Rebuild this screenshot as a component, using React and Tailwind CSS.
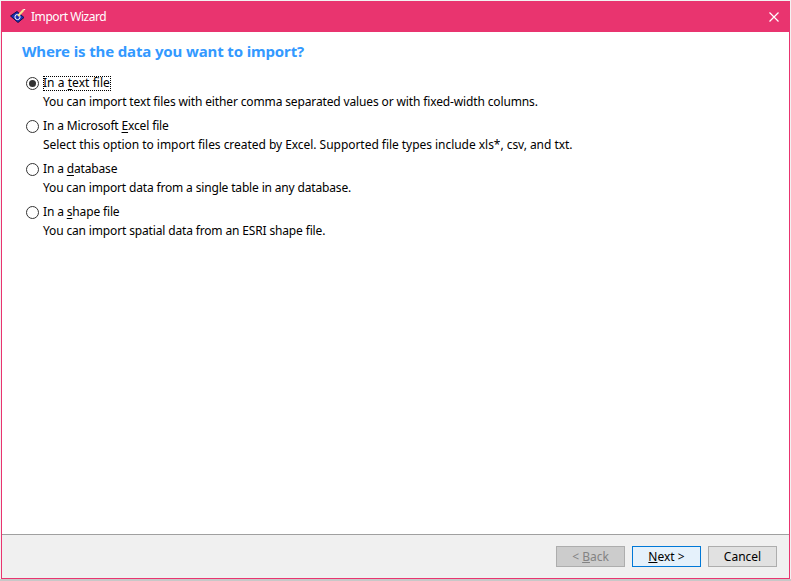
const options = [
  { before: 'In a ', key: 't', after: 'ext file', text: 'You can import text files with either comma separated values or with fixed-width columns.', track: 'tracking-[-0.135px]', checked: true },
  { before: 'In a Microsoft ', key: 'E', after: 'xcel file', text: 'Select this option to import files created by Excel. Supported file types include xls*, csv, and txt.', track: 'tracking-[-0.04px]' },
  { before: 'In a ', key: 'd', after: 'atabase', text: 'You can import data from a single table in any database.', track: 'tracking-[-0.16px]' },
  { before: 'In a ', key: 's', after: 'hape file', text: 'You can import spatial data from an ESRI shape file.', track: 'tracking-[-0.15px]' },
]

function WizardIcon() {
  return (
    <svg width="16" height="14" viewBox="0 0 16 14" className="shrink-0 mb-[2px]">
      <path d="M0.5 7 L7 2.5 L14 8.5 L8 13.5 Z" fill="#1a2fb0" stroke="#10104a" strokeWidth="1" />
      <circle cx="7.5" cy="8" r="2.6" fill="none" stroke="#ffffff" strokeWidth="1" />
      <path d="M8 7 L13.5 1" stroke="#f5e08a" strokeWidth="2" />
      <path d="M13.5 1 L15 0" stroke="#ffffff" strokeWidth="1.5" />
    </svg>
  )
}

function Radio({ checked }) {
  return (
    <span className="w-[13px] h-[13px] rounded-full border border-[#333333] bg-white flex items-center justify-center shrink-0">
      {checked && <span className="w-[7px] h-[7px] rounded-full bg-[#333333]" />}
    </span>
  )
}

function Option({ opt }) {
  return (
    <div className="h-[43px]">
      <div className="flex items-center h-[19px] pl-[24px] gap-[4px]">
        <Radio checked={opt.checked} />
        <span className={opt.checked
          ? 'tracking-[0.05px] leading-[14px] h-[15px] pr-[1px] outline outline-1 outline-dotted outline-black -outline-offset-1'
          : 'tracking-[-0.15px] leading-[14px] h-[15px]'}>
          {opt.before}<u className="underline underline-offset-2">{opt.key}</u>{opt.after}
        </span>
      </div>
      <p className={'pl-[41px] h-[19px] leading-[19px] mt-[-1.5px] ' + opt.track}>{opt.text}</p>
    </div>
  )
}

export default function App() {
  return (
    <div className="w-[791px] h-[581px] bg-[#f2f2f2] overflow-hidden pt-[1px] flex flex-col font-['Noto_Sans',sans-serif] text-[12px] text-black">
      <div className="ml-[1px] w-[789px] h-[578px] border border-[#e9346f] bg-white flex flex-col shrink-0">
        <div className="h-[30px] bg-[#e9346f] flex items-center pl-[8px] text-white shrink-0">
          <WizardIcon />
          <span className="ml-[5px] tracking-[-0.45px]">Import Wizard</span>
          <svg width="10" height="10" viewBox="0 0 10 10" className="ml-auto mr-[10px]">
            <path d="M0.5 0.5 L9.5 9.5 M9.5 0.5 L0.5 9.5" stroke="#ffffff" strokeWidth="1.2" />
          </svg>
        </div>
        <div className="flex-1 pt-[8px]">
          <h1 className="pl-[20px] text-[15px] leading-[22px] font-bold tracking-[-0.135px] text-[#3399ff]">Where is the data you want to import?</h1>
          <div className="mt-[12px]">
            {options.map(o => <Option key={o.key} opt={o} />)}
          </div>
        </div>
        <div className="h-[44px] border-t border-[#a0a0a0] bg-[#f0f0f0] flex items-center justify-end gap-[7px] pr-[12px] shrink-0">
          <button className="w-[69px] h-[21px] border border-[#adadad] bg-[#cccccc] text-[#838383] leading-none">&lt; <u>B</u>ack</button>
          <button className="w-[69px] h-[21px] border border-[#0078d7] bg-[#e5f1fb] leading-none"><u>N</u>ext &gt;</button>
          <button className="w-[69px] h-[21px] border border-[#adadad] bg-[#e1e1e1] leading-none">Cancel</button>
        </div>
      </div>
      <div className="flex-1 bg-[#c8c8c8]" />
    </div>
  )
}
